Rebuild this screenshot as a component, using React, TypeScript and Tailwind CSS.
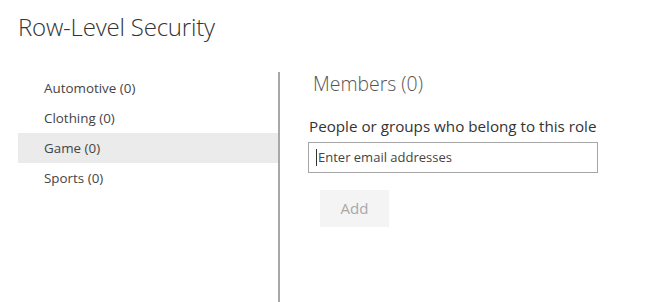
export default function App() {
  const items = ["Automotive (0)", "Clothing (0)", "Game (0)", "Sports (0)"];
  return (
    <div
      className="relative w-[670px] h-[302px] bg-white overflow-hidden text-[#333]"
      style={{ fontFamily: '"Open Sans", "Noto Sans", sans-serif' }}
    >
      <div className="pl-[18px] pt-[11px] h-[72px]">
        <h1 className="text-[24px] leading-[32px] font-light text-[#333] tracking-[-0.2px]">
          Row-Level Security
        </h1>
      </div>
      <div className="flex">
        <div className="w-[260px] ml-[18px] pt-[1px]">
          {items.map((it) => (
            <div
              key={it}
              className={`h-[30px] flex items-center pl-[26px] text-[13.4px] text-[#444] ${
                it === "Game (0)" ? "bg-[#ebebeb]" : ""
              }`}
            >
              {it}
            </div>
          ))}
        </div>
        <div className="w-[2px] h-[230px] bg-[#a8a8a8]" />
        <div className="pl-[28px] flex flex-col">
          <div className="pl-[5px] h-[26px] text-[19.4px] leading-[24px] font-light text-[#555]">
            Members (0)
          </div>
          <div className="mt-[18px] pl-[1px] text-[15.2px] leading-[20px] text-[#333]">
            People or groups who belong to this role
          </div>
          <div className="mt-[6px] w-[290px] h-[31px] border border-[#a6a6a6] flex items-center pl-[7px] text-[13px] text-[#444]">
            <span className="w-px h-[17px] bg-[#333] mr-[1px]" />
            Enter email addresses
          </div>
          <div className="mt-[17px] ml-[12px] w-[69px] h-[37px] bg-[#f4f4f4] flex items-center justify-center text-[15px] text-[#a8a8a8]">
            Add
          </div>
        </div>
      </div>
    </div>
  );
}
